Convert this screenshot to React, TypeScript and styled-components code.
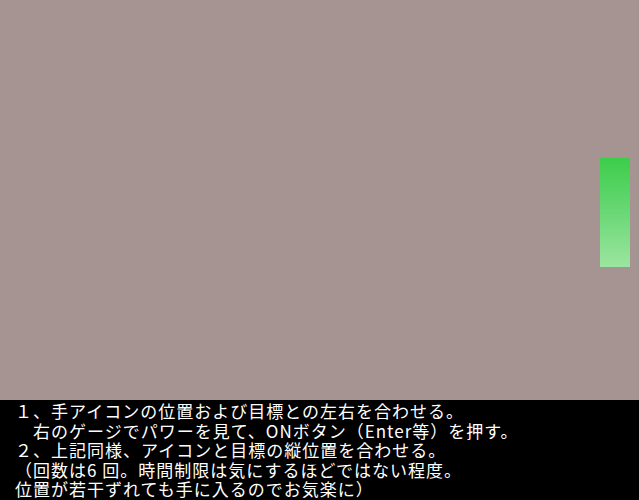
import React from "react";
import styled, { createGlobalStyle } from "styled-components";

const Global = createGlobalStyle`
  html, body { margin: 0; padding: 0; background: #000; }
  body { width: 639px; height: 500px; overflow: hidden; }
`;

const Screen = styled.div`
  width: 639px;
  height: 500px;
  display: flex;
  flex-direction: column;
`;

const Field = styled.div`
  height: 400px;
  background: #a69492;
  display: flex;
  justify-content: flex-end;
  align-items: flex-start;
  padding: 158px 9px 0 0;
  box-sizing: border-box;
`;

const Gauge = styled.div<{ $h: number }>`
  width: 30px;
  height: ${(p) => p.$h}px;
  background: linear-gradient(to bottom, #3ccd4a 0%, #6ad876 50%, #9ce5a0 100%);
`;

const Message = styled.div`
  height: 100px;
  background: #000;
  color: #fff;
  padding: 1px 0 0 15px;
  box-sizing: border-box;
  font-family: "Noto Sans CJK JP", "DejaVu Sans", sans-serif;
  font-size: 17px;
  letter-spacing: 1px;
  line-height: 19.5px;
  white-space: pre;
`;

const Line = styled.div``;

const lines = [
  "１、手アイコンの位置および目標との左右を合わせる。",
  "　右のゲージでパワーを見て、ONボタン（Enter等）を押す。",
  "２、上記同様、アイコンと目標の縦位置を合わせる。",
  "（回数は6 回。時間制限は気にするほどではない程度。",
  "位置が若干ずれても手に入るのでお気楽に）",
];

export default function App() {
  return (
    <Screen>
      <Global />
      <Field>
        <Gauge $h={109} />
      </Field>
      <Message>
        {lines.map((l, i) => (
          <Line key={i}>{l}</Line>
        ))}
      </Message>
    </Screen>
  );
}
